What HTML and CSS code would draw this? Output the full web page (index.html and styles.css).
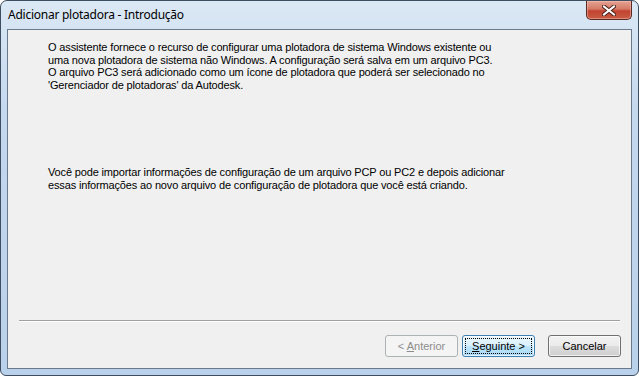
FILE: index.html
```html
<!DOCTYPE html>
<html lang="pt-BR">
<head>
    <meta charset="UTF-8">
    <meta name="viewport" content="width=device-width, initial-scale=1.0">
    <title>Adicionar plotadora - Introdução</title>
    <link rel="stylesheet" href="styles.css">
</head>
<body>
    <div class="window">
        <div class="titlebar">
            <span class="title">Adicionar plotadora - Introdução</span>
            <button type="button" class="close-btn" aria-label="Fechar">
                <svg width="14" height="11" viewBox="0 0 14 11">
                    <path d="M2 1.5 L12 9.5 M12 1.5 L2 9.5" stroke="#4a1f1a" stroke-width="4" stroke-linecap="square"/>
                    <path d="M2 1.5 L12 9.5 M12 1.5 L2 9.5" stroke="#ffffff" stroke-width="2" stroke-linecap="square"/>
                </svg>
            </button>
        </div>

        <div class="client">
            <div class="content">
                <p>
                    O assistente fornece o recurso de configurar uma plotadora de sistema Windows existente ou<br>
                    uma nova plotadora de sistema não Windows. A configuração será salva em um arquivo PC3.<br>
                    O arquivo PC3 será adicionado como um ícone de plotadora que poderá ser selecionado no<br>
                    'Gerenciador de plotadoras' da Autodesk.
                </p>
                <p class="second">
                    Você pode importar informações de configuração de um arquivo PCP ou PC2 e depois adicionar<br>
                    essas informações ao novo arquivo de configuração de plotadora que você está criando.
                </p>
            </div>

            <div class="separator"></div>

            <div class="button-row">
                <button type="button" class="btn disabled" disabled>&lt; <u>A</u>nterior</button>
                <button type="button" class="btn default"><span class="focus"><u>S</u>eguinte &gt;</span></button>
                <button type="button" class="btn cancel">Cancelar</button>
            </div>
        </div>
    </div>
</body>
</html>
```

FILE: styles.css
```css
body {
    margin: 0;
    padding: 0;
    background-color: #ffffff;
    font-family: "Liberation Sans", Arial, sans-serif;
}

.window {
    width: 639px;
    height: 376px;
    box-sizing: border-box;
    border: 1px solid #3e4e60;
    border-radius: 7px 7px 6px 6px;
    background: linear-gradient(to bottom, #dbe8f5 0%, #c4d8ee 30%, #b9d1ea 100%);
    display: flex;
    flex-direction: column;
    overflow: hidden;
}

.titlebar {
    height: 28px;
    display: flex;
    align-items: flex-start;
    justify-content: space-between;
    padding: 0 6px 0 7px;
    flex-shrink: 0;
}

.title {
    font-family: "Noto Sans", "Open Sans", sans-serif;
    font-size: 12px;
    letter-spacing: -0.25px;
    color: #000000;
    margin-top: 5px;
}

.close-btn {
    width: 46px;
    height: 19px;
    margin-top: 0;
    border: 1px solid #5b2a24;
    border-top: none;
    border-radius: 0 0 5px 5px;
    background: linear-gradient(to bottom, #e5a493 0%, #d47865 45%, #c24430 55%, #c85b44 100%);
    box-shadow: inset 0 0 0 1px rgba(255, 200, 190, 0.45);
    padding: 0;
    display: flex;
    align-items: center;
    justify-content: center;
}

.client {
    flex: 1;
    margin: 0 6px 6px 6px;
    border: 1px solid #6a7a8c;
    background-color: #f0f0f0;
    display: flex;
    flex-direction: column;
}

.content {
    flex: 1;
    padding: 11px 10px 0 40px;
    font-size: 11px;
    line-height: 12.5px;
    letter-spacing: -0.15px;
    color: #000000;
}

.content p {
    margin: 0;
}

.content .second {
    margin-top: 75px;
}

.separator {
    margin: 0 11px 0 11px;
    border-top: 1px solid #a0a0a0;
    border-bottom: 1px solid #ffffff;
}

.button-row {
    display: flex;
    justify-content: flex-end;
    margin: 13px 10px 11px 0;
}

.btn {
    width: 73px;
    height: 22px;
    box-sizing: border-box;
    font-family: "Liberation Sans", Arial, sans-serif;
    font-size: 11px;
    color: #000000;
    border: 1px solid #707070;
    border-radius: 3px;
    background: linear-gradient(to bottom, #f2f2f2 0%, #ebebeb 50%, #dddddd 51%, #cfcfcf 100%);
    box-shadow: inset 0 0 0 1px rgba(255, 255, 255, 0.7);
    padding: 0;
    margin-left: 4px;
}

.btn.disabled {
    color: #8d8d8d;
    border-color: #adb2b5;
    background: #f4f4f4;
    box-shadow: none;
}

.btn.default {
    border-color: #3c7fb1;
    background: linear-gradient(to bottom, #eaf6fd 0%, #d9f0fc 50%, #bee6fd 51%, #a7d9f5 100%);
    padding: 2px;
}

.btn.default .focus {
    display: flex;
    align-items: center;
    justify-content: center;
    height: 100%;
    box-sizing: border-box;
    border: 1px dotted #000000;
}

.btn.cancel {
    margin-left: 13px;
}
```
